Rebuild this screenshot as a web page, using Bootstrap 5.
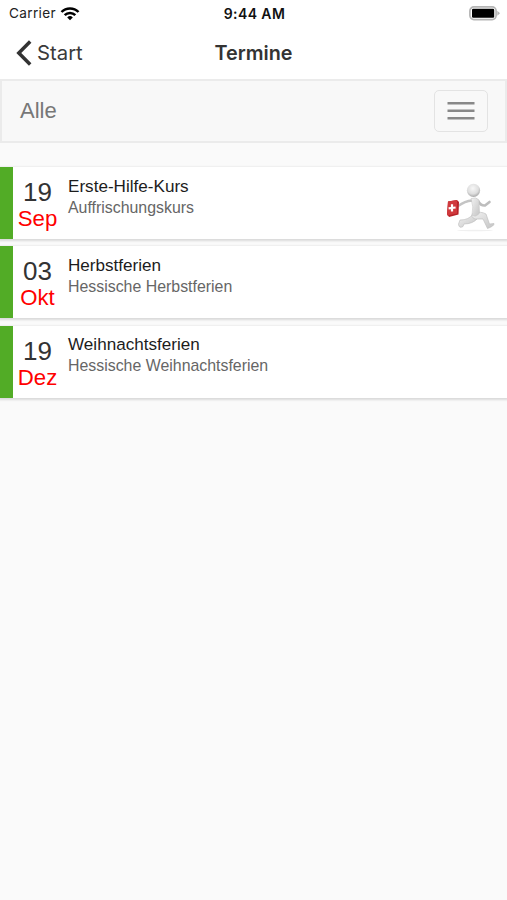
<!DOCTYPE html>
<html lang="de">
<head>
<meta charset="utf-8">
<meta name="viewport" content="width=device-width, initial-scale=1">
<title>Termine</title>
<link href="https://cdn.jsdelivr.net/npm/bootstrap@5.3.0/dist/css/bootstrap.min.css" rel="stylesheet">
<style>
body{background:#fafafa;font-family:"Liberation Sans",Arial,sans-serif;color:#222;min-height:900px;overflow-x:hidden}
.app-head{background:#fff;height:79px;font-family:Inter,sans-serif}
.side{flex:1 1 0}
.status{height:27px;font-size:13.6px;letter-spacing:.35px;line-height:27px;color:#222;padding:0 7px 0 9px}
.status .clock{font-size:14px;font-weight:600;color:#111;letter-spacing:.4px}
.titlebar{height:52px;padding:0 16px;line-height:52px}
.back-link{font-size:20.3px;color:#3a3a3a;letter-spacing:0}
.page-title{font-size:19.8px;font-weight:600;color:#333;letter-spacing:0}
.filter-bar{height:64px;background:#f8f8f8;border:2px solid #ebebeb;padding:0 17px 0 18px;margin-bottom:24px}
.filter-bar .navbar-brand{font-size:22px;color:#777;line-height:1}
.filter-bar .navbar-toggler{width:54px;height:42px;border:1.5px solid #e3e3e3;border-radius:5px}
.events{gap:7.3px}
.event{height:72px;background:#fff;border-left:13px solid #52ac26;box-shadow:0 1px 2px 1px rgba(0,0,0,.13)}
.date-col{width:49px;padding-top:12px}
.day{font-size:26px;line-height:27px;color:#333}
.month{font-size:22.2px;line-height:25px;color:#f00}
.info{padding:8.5px 0 0 6px}
.event-name{font-size:17.1px;line-height:21px;color:#1c1c1c}
.event-note{font-size:15.9px;line-height:21px;color:#666}
.runner{margin:14px 12px 0 0}
</style>
<script src="https://cdn.jsdelivr.net/npm/bootstrap@5.3.0/dist/js/bootstrap.bundle.min.js"></script>
</head>
<body>
<header class="app-head">
  <div class="status d-flex align-items-center">
    <div class="side d-flex align-items-center">Carrier
      <svg class="ms-1" width="20" height="15" viewBox="0 0 20 15"><g fill="none" stroke="#000" stroke-width="2.5"><path d="M1.5 6A11.8 11.8 0 0 1 18.5 6"/><path d="M4.7 9.2A7.3 7.3 0 0 1 15.3 9.2"/></g><path d="M7.2 11.4A4 4 0 0 1 12.8 11.4L10 14.2Z"/></svg>
    </div>
    <div class="clock">9:44 AM</div>
    <div class="side d-flex justify-content-end">
      <svg width="31" height="15" viewBox="0 0 31 15"><rect x=".9" y=".9" width="26.2" height="12.7" rx="4" fill="#fff" stroke="#b5b5b5" stroke-width="1.7"/><rect x="3" y="2.8" width="22.2" height="9" rx="1.2"/><path d="M28.3 4.8 31 7.2 28.3 9.7Z" fill="#b5b5b5"/></svg>
    </div>
  </div>
  <div class="titlebar d-flex align-items-center">
    <div class="side"><a href="#" class="back-link text-decoration-none d-flex align-items-center"><svg class="me-1" width="17" height="28" viewBox="0 0 17 28"><path d="M14.2 2.6 2.8 14 14.2 25.4" fill="none" stroke="#333" stroke-width="3.5"/></svg>Start</a></div>
    <div class="page-title">Termine</div>
    <div class="side"></div>
  </div>
</header>
<nav class="filter-bar navbar d-flex justify-content-between align-items-center">
  <span class="navbar-brand m-0 p-0">Alle</span>
  <button class="navbar-toggler p-0 d-flex align-items-center justify-content-center" type="button" aria-label="Menü"><svg width="28" height="20" viewBox="0 0 28 20"><path d="M.5 2.3h27M.5 9.8h27M.5 17.3h27" stroke="#888" stroke-width="2.4"/></svg></button>
</nav>
<main class="events d-flex flex-column">
  <article class="event d-flex">
    <div class="date-col text-center"><div class="day">19</div><div class="month">Sep</div></div>
    <div class="info flex-grow-1"><div class="event-name">Erste-Hilfe-Kurs</div><div class="event-note">Auffrischungskurs</div></div>
    <svg class="runner" width="50" height="52" viewBox="0 0 50 52">
      <defs>
        <radialGradient id="skin" cx=".45" cy=".35" r=".65"><stop offset="0" stop-color="#f7f7f7"/><stop offset=".65" stop-color="#dedede"/><stop offset="1" stop-color="#aaa"/></radialGradient>
        <linearGradient id="limb" x1="0" y1="0" x2="1" y2="1"><stop offset="0" stop-color="#f3f3f3"/><stop offset="1" stop-color="#c4c4c4"/></linearGradient>
      </defs>
      <ellipse cx="30" cy="49.5" rx="18" ry=".8" fill="#f0f0f0"/>
      <path d="M27 19.5Q20 20 13 25" fill="none" stroke="#c4c4c4" stroke-width="2.6" stroke-linecap="round"/>
      <path d="M33 20Q36 25 40 24.5L44.5 21" fill="none" stroke="#bdbdbd" stroke-width="2.6" stroke-linecap="round" stroke-linejoin="round"/>
      <path d="M28 33Q24 39 15 39L13.5 43Q14 48 18 45.5L19 43Q28 43 33 37Z" fill="url(#limb)" stroke="#bbb" stroke-width=".6"/>
      <path d="M28 32Q36 30 41 33L44.5 43L49 42.5Q49.5 45 42.5 47.5L38 38L30 38Q25 36 28 32Z" fill="url(#limb)" stroke="#bbb" stroke-width=".6"/>
      <path d="M26 17.5Q31 15.5 34 19L34.5 32Q31 37 27 34Q29 26 26 17.5Z" fill="url(#limb)" stroke="#c0c0c0" stroke-width=".5"/>
      <circle cx="28.5" cy="9.3" r="6.6" fill="url(#skin)"/>
      <path d="M3 20.5 12 19 14 21 13.5 33.5 4 36 2 33Z" fill="#b82329"/>
      <path d="M3 20.5 12 19 12 32.5 2 34.5Z" fill="#d0393d"/>
      <path d="M7 23.2v7.4M3.6 27.3l7-.8" stroke="#fff" stroke-width="2.2"/>
    </svg>
  </article>
  <article class="event d-flex">
    <div class="date-col text-center"><div class="day">03</div><div class="month">Okt</div></div>
    <div class="info flex-grow-1"><div class="event-name">Herbstferien</div><div class="event-note">Hessische Herbstferien</div></div>
  </article>
  <article class="event d-flex">
    <div class="date-col text-center"><div class="day">19</div><div class="month">Dez</div></div>
    <div class="info flex-grow-1"><div class="event-name">Weihnachtsferien</div><div class="event-note">Hessische Weihnachtsferien</div></div>
  </article>
</main>
</body>
</html>
